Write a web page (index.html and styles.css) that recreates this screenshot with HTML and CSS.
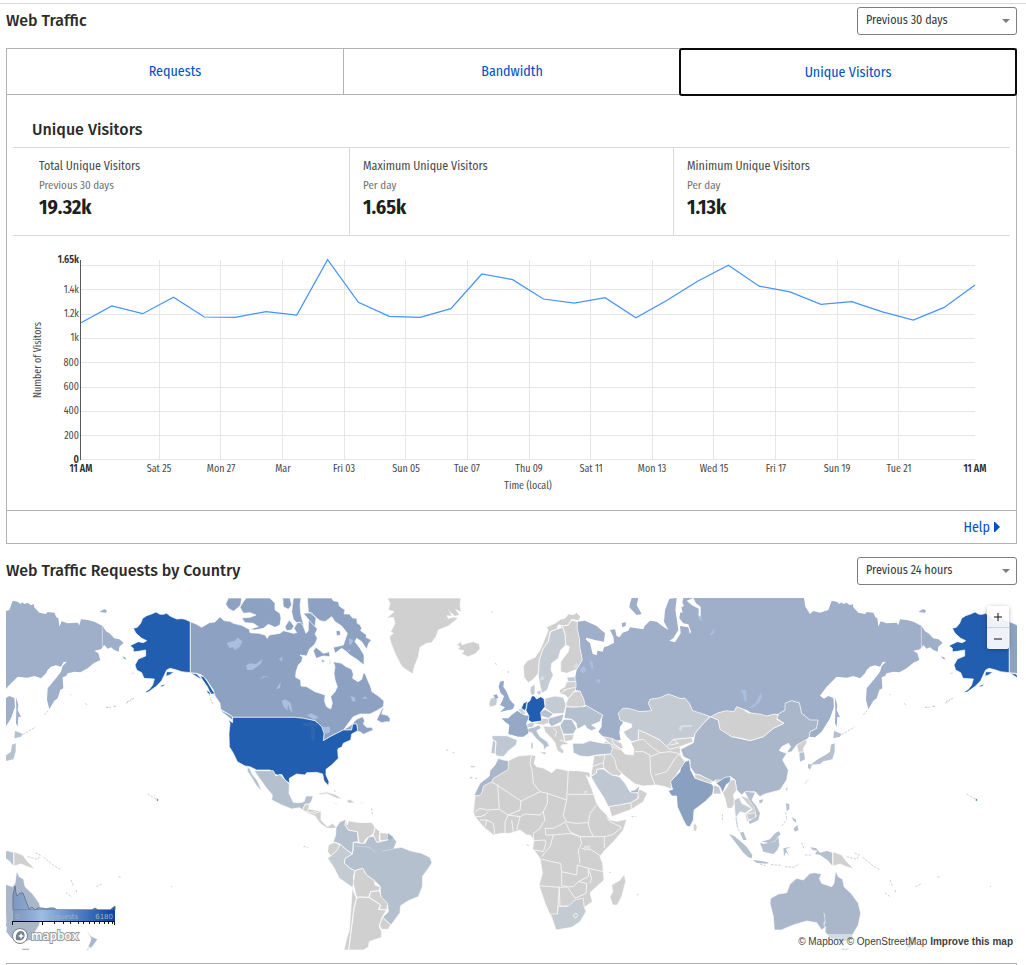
FILE: index.html
```html
<!DOCTYPE html>
<html lang="en">
<head>
<meta charset="utf-8">
<title>Web Traffic</title>
<link rel="stylesheet" href="styles.css">
</head>
<body>
<main class="page">
  <header class="section-head">
    <h2 class="heading"><label for="range-traffic">Web Traffic</label></h2>
    <div class="select-wrap">
      <select class="select" id="range-traffic"><option>Previous 30 days</option><option>Previous 24 hours</option></select>
    </div>
  </header>

  <section class="panel">
    <nav class="tabs">
      <button class="tab" type="button">Requests</button>
      <button class="tab" type="button">Bandwidth</button>
      <button class="tab tab-active" type="button">Unique Visitors</button>
    </nav>
    <h3 class="heading panel-title">Unique Visitors</h3>
    <div class="stats">
      <div class="stat"><div class="stat-name">Total Unique Visitors</div><div class="stat-note">Previous 30 days</div><div class="stat-value">19.32k</div></div>
      <div class="stat"><div class="stat-name">Maximum Unique Visitors</div><div class="stat-note">Per day</div><div class="stat-value">1.65k</div></div>
      <div class="stat"><div class="stat-name">Minimum Unique Visitors</div><div class="stat-note">Per day</div><div class="stat-value">1.13k</div></div>
    </div>
    <svg class="chart" viewBox="13 236 997 274" role="img" aria-label="Unique visitors per day">
      <path class="grid" d="M81 265.500H975M81 289.500H975M81 314.500H975M81 338.500H975M81 362.500H975M81 387.500H975M81 411.500H975M81 435.500H975M81 459.500H975M159.500 260V460M220.500 260V460M282.500 260V460M344.500 260V460M405.500 260V460M467.500 260V460M529.500 260V460M590.500 260V460M652.500 260V460M713.500 260V460M775.500 260V460M837.500 260V460M898.500 260V460"/>
      <path class="axis" d="M80.500 260V460"/>
      <polyline class="series" points="81,322.700 111.800,306 142.700,313.700 173.500,297.300 204.300,317 235.100,317.400 266,311.600 296.800,315 327.600,259.700 358.400,302.300 389.300,316.300 420.100,317.300 450.900,308.600 481.800,274 512.600,279.600 543.400,299 574.300,303.200 605.100,297.700 635.900,317.700 666.700,300.500 697.600,281.200 728.400,265.200 759.200,286.200 790,291.800 820.900,304.300 851.700,301.600 882.500,311.800 913.300,320 944.200,307.400 975,285"/>
      <g class="tick tick-y">
        <text class="strong" x="79" y="263">1.65k</text><text x="79" y="293">1.4k</text><text x="79" y="317">1.2k</text><text x="79" y="341">1k</text><text x="79" y="366">800</text><text x="79" y="390">600</text><text x="79" y="414">400</text><text x="79" y="439">200</text><text class="strong" x="79" y="463">0</text>
      </g>
      <g class="tick tick-x">
        <text class="strong" x="81" y="472">11 AM</text><text x="159" y="472">Sat 25</text><text x="221" y="472">Mon 27</text><text x="283" y="472">Mar</text><text x="344" y="472">Fri 03</text><text x="406" y="472">Sun 05</text><text x="467" y="472">Tue 07</text><text x="529" y="472">Thu 09</text><text x="591" y="472">Sat 11</text><text x="652" y="472">Mon 13</text><text x="714" y="472">Wed 15</text><text x="776" y="472">Fri 17</text><text x="837" y="472">Sun 19</text><text x="899" y="472">Tue 21</text><text class="strong" x="975" y="472">11 AM</text>
        <text x="528" y="489">Time (local)</text>
        <text transform="translate(41 360) rotate(-90)">Number of Visitors</text>
      </g>
    </svg>
    <footer class="panel-foot"><a class="help" href="#help">Help <svg class="caret" viewBox="0 0 6 10"><path d="M0 0h1l5 5-5 5H0z"/></svg></a></footer>
  </section>

  <header class="section-head section-head-map">
    <h2 class="heading"><label for="range-map">Web Traffic Requests by Country</label></h2>
    <div class="select-wrap">
      <select class="select" id="range-map"><option>Previous 24 hours</option><option>Previous 30 days</option></select>
    </div>
  </header>

  <section class="map">
    <svg class="map-canvas" viewBox="0 0 3033 1056" preserveAspectRatio="xMidYMid slice" role="img" aria-label="Requests by country">
      <defs>
      <g id="world">
        <g transform="translate(1902 -24)">
          <path class="ru" d="M-188 95L-165 92L-130 108L-105 130L-108 155L-135 150L-160 143L-163 148L-150 160L-145 180L-142 192L-130 196L-128 182L-112 185L-108 172L-96 168L-78 158L-80 140L-90 120L-75 118L-70 138L-62 142L-52 128L-35 122L-30 112L10 118L14 108L30 92L50 95L70 110L85 120L72 95L75 60L88 26L110 24L106 60L110 85L115 120L100 145L88 152L105 157L122 130L120 108L145 112L150 132L153 125L145 103L130 100L118 85L122 60L130 24H492L496 50L510 72L520 63L540 68L565 60L575 32L590 35L598 42L604 37L610 42L620 38L630 46L638 42L640 52L655 68L675 72L680 66L700 68L706 82L712 85L715 110L722 94L740 100L770 98L775 106L780 88L800 90L820 95L845 108L855 124L865 130L880 145L895 148L908 158L895 170L893 185L880 180L870 172L860 176L850 165L840 178L820 182L832 190L838 210L820 218L800 235L778 247L760 245L740 250L735 258L725 262L727 295L718 300L710 325L700 332L685 358L678 330L680 295L705 265L720 245L725 228L738 215L728 216L720 230L705 226L690 230L680 240L675 250L660 265L640 258L620 263L590 260L560 290L540 317L552 326L565 318L580 324L582 350L570 385L545 425L525 442L508 440L510 425L530 415L534 390L510 390L485 370L478 338L455 332L435 340L435 360L415 372L405 372L380 378L335 370L320 360L290 350L282 365L260 362L235 368L212 380L190 372L170 372L158 362L148 340L135 325L120 325L85 312L60 323L30 328L25 340L35 362L0 365L-30 358L-40 355L-65 370L-60 390L-50 396L-60 410L-62 430L-58 450L-70 452L-90 447L-110 440L-125 425L-115 410L-115 395L-112 375L-135 362L-160 347L-168 345L-168 330L-180 303L-195 300L-195 265L-190 240L-173 210L-180 175L-182 145L-190 115Z"/>
          <path class="ru" d="M585 322L592 345L590 360L600 382L592 380L590 410L585 400L586 360ZM-25 24H-5L-10 45L5 72L-10 75L-32 52L-30 40ZM835 66L850 57L858 62L855 68ZM-55 100l12-4 0 12-10 4z"/>
          <path class="lake" d="M362 308L366 320L358 338L340 352L322 355L345 342ZM300 300l18 0 2 35 -8-3 -3-20zM210 132l14-16-2 14-12 6zM-180 235l12-8 8 14-10 10-8-5zM-152 212l10 5 3 18-6 2zM-132 268h12v10h-8zM172 70l12 8 4 18-12-8z"/>
          <path class="strait" d="M160 24L168 40L182 50L182 80L176 76L176 56L156 46L140 32ZM120 24l12 24-8 4 4 16-12-2z"/>
          <path class="cn" d="M122 478L160 458L165 430L190 400L212 380L235 390L240 415L275 440L330 452L370 440L400 415L432 400L410 385L415 372L435 360L435 340L455 332L478 338L485 370L510 390L534 390L530 415L510 425L508 440L495 455L470 465L455 485L440 488L452 470L445 460L425 470L418 482L440 490L428 510L445 540L440 570L420 600L375 612L360 620L345 605L315 605L305 615L290 600L285 570L272 560L240 572L215 575L180 555L165 552L150 530L150 510L130 500Z"/>
          <path class="none" d="M212 380L235 368L260 362L282 365L290 350L310 358L325 368L360 372L380 378L405 372L415 376L410 388L432 400L400 415L370 440L330 452L305 445L275 440L240 418L235 390ZM163 553L180 555L215 572L215 582L165 565ZM225 570h18v8h-16zM248 608L262 590L270 568L285 570L290 600L280 615L285 640L275 655L262 655L255 625ZM300 615L325 625L345 655L350 680L320 695L315 672L338 658L320 640ZM470 465L500 448L500 460L490 475L492 485L475 487Z"/>
          <path class="in" d="M122 520L148 510L152 540L165 565L215 582L222 590L218 612L195 635L162 660L160 690L150 710L140 708L130 690L112 650L110 618L95 618L85 602L98 598L90 575L120 545ZM228 580L255 562L272 560L270 575L258 585L248 608L240 590Z"/>
          <path class="light" d="M220 585L238 590L244 612L220 612ZM282 630L298 622L305 640L335 655L315 670L300 665L290 680L295 712L290 710L285 670ZM436 595l8-5-2 20zM320 672L348 668L345 685L325 690Z"/>
          <path class="mid" d="M315 605L345 608L335 630L350 650L360 670L355 690L330 702L325 695L350 680L345 655L325 625ZM358 630L370 628L366 638L358 640ZM478 488L492 487L495 508L480 515ZM573 464L584 460L584 485L577 508L550 514L540 522L512 524L530 510L560 493L570 485ZM504 522l12 2-6 15-6-6zM582 422L605 432L600 440L580 445Z"/>
          <path class="chain" d="M605 434L645 410M670 375l12-14M748 313l3 2M793 340l6 6M855 352h15M878 350l10-2M918 335l14-8M495 580l10-12M980 612l25 15M247 672v20"/>
          <path class="us" d="M1007 625l6 4-3 5-4-3z"/>
        </g>
        <g transform="translate(-18 -24)">
          <path class="us" d="M571 95L555 88L545 86L530 87L510 78L500 70L490 73L480 73L468 66L455 72L440 77L428 85L422 100L412 112L400 115L408 130L425 145L440 152L430 158L415 155L390 167L400 175L400 185L415 184L437 180L437 198L415 207L405 225L410 240L425 248L432 265L463 267L458 285L448 298L430 308L445 306L470 288L485 272L500 240L510 235L530 240L545 245L571 248ZM500 245l-2 14 12-5 12-8zM481 287l14-5-2 5-10 4zM365 199l10 3 5 7-6-2zM393 249l8-1-1 4zM410 320l8-4M427 309l10-4zM571 248L590 252L600 262L615 285L618 295L606 270L590 260ZM600 257L612 260L624 278L640 305L645 300V312L632 312L622 290L608 270ZM620 300l12 8-2 6-8-6z"/>
          <path class="chain" d="M318 352h14M340 350l8-3M378 340l14-8M396 328l10-6M626 312l8 12M630 326l10 18"/>
        </g>
        <g transform="translate(582 -24)">
          <path class="ca" d="M-29 95L-10 103L5 112L15 106L28 98L45 96L60 80L72 92L90 94L100 100L125 106L148 118L150 128L175 130L195 135L202 145L208 135L240 130L250 122L262 125L280 130L290 128L282 115L292 98L305 96L318 130L325 122L325 95L330 88L340 100L352 118L345 132L352 145L345 162L328 178L320 198L300 195L308 202L305 215L295 225L288 245L287 262L302 270L303 288L320 290L345 305L360 310L375 315L374 335L380 350L392 357L397 340L392 320L405 305L412 290L405 270L402 250L405 230L400 215L425 220L435 228L455 238L460 252L458 265L474 275L485 268L490 250L495 250L503 270L512 290L516 305L535 318L552 333L550 350L530 362L510 372L480 372L460 380L445 400L432 418L450 408L470 388L488 380L494 392L490 402L500 412L515 412L520 420L490 433L480 425L473 425L470 402L458 402L455 420L430 420L410 430L390 440L370 452L372 430L365 410L345 392L330 390L310 385L285 382H98L90 375L62 358L60 340L45 318L40 300L20 270L5 255L-10 250L-29 248Z"/>
          <path class="ca" d="M545 358L552 350L545 372L562 376L570 385L570 396L560 395L545 398L530 390ZM85 24H125L122 45L112 55L100 64L85 55L77 42ZM138 24H210L225 40L225 60L240 70L243 85L240 105L225 112L205 103L190 115L165 120L148 118L175 110L160 100L135 98L125 84L150 82L168 75L150 68L130 70L120 52L128 38ZM248 24H270L275 45L265 58L250 50ZM255 110L268 90L282 108L275 120L260 122ZM280 24H303L300 45L302 70L312 110L300 96L290 98L280 88L275 65ZM322 24H395L400 32L415 35L418 48L435 60L432 72L448 72L458 84L470 85L472 100L480 104L485 115L482 122L500 135L498 142L514 150L506 160L500 178L485 155L470 145L465 155L480 175L492 195L492 225L470 208L450 195L440 185L425 175L405 190L400 172L430 165L442 130L425 108L405 95L395 80L375 95L360 92L345 80L325 65ZM310 70L335 68L348 85L345 110L335 100ZM340 182L348 172L370 190L388 185L390 200L370 198L348 205ZM408 122l12 0 2 12-12 4zM362 208l14 4-8 6zM390 208l2 12-5 2zM62 360L96 378L99 392L84 380L66 366Z"/>
          <path class="lake" d="M80 158L105 152L112 142L128 155L118 172L105 180L98 172L88 174ZM138 226L150 220L168 222L188 206L182 222L158 240L142 240ZM178 268L190 258L212 262L192 262ZM236 208l12-8-2 14zM228 298l14-22-2 18zM245 332L256 328L272 338L278 368L270 360L264 342L262 362L250 348ZM320 375l14-5 22 12-12 8zM362 410l28 0 0 15-12 8zM446 145L460 150L455 162L448 165ZM442 180h10l-5 5zM452 318L465 322L466 335L456 332ZM485 325l12-6 5 8z"/>
          <path class="us" d="M98 382H285L310 385L345 392L365 410L372 430L370 452L390 440L410 430L430 420L455 420L458 402H470L473 422L455 432L452 450L430 460L425 472L415 475L413 480L415 505L395 525L378 538L378 555L387 575L385 587L372 572L368 552L350 547L320 548L315 555L290 552L268 565L268 580L255 570L245 553L235 556L225 553L210 540H170L150 530L135 528L112 515L100 490L88 470L87 430L90 400L85 390L98 398Z"/>
          <path class="us-lake" d="M335 408L345 415L345 450L335 452L332 430ZM305 400L335 395L358 402L350 412L330 408L315 408Z"/>
          <path class="none" d="M562 24H783L780 45L785 75L770 88L745 108L728 115L715 120L708 140L695 158L680 160L660 172L655 200L645 225L638 252L620 240L608 232L600 220L585 190L573 160L568 140L580 130L572 125L585 100L580 82L560 85L582 65L565 60L570 40Z"/>
          <path class="strait" d="M783 88l-20-6-18 4-6-10 16 2-12-24 8 12 14 12 12-4-12-18 20 10z"/>
        </g>
        <g transform="translate(702 486)">
          <path class="mx" d="M22 22L45 32H100L108 48L120 43L135 60L148 72L147 100L160 127L180 128L192 125L198 108L220 108L215 122L208 132L195 133L188 150L178 143L155 147L125 135L95 120L97 105L80 85L62 60L48 40L38 26L30 28L38 45L52 62L66 94L50 78L32 48L22 34Z"/>
          <path class="none" d="M188 150L195 133L208 132L206 147L225 150L243 153L243 180L262 200L278 190L290 203L282 205L262 205L240 190L225 168L205 160ZM235 100L260 96L285 103L308 117L290 115L260 101L240 104ZM318 122L330 118L345 128L328 130ZM283 129h9v3h-9zM360 127h10v3h-10z"/>
          <path class="border" d="M206 147L200 155L215 158L232 150M220 162L243 153"/>
          <path class="br" d="M288 203L300 185L318 178L315 195L325 210L352 215L355 245L340 247L340 270L335 280L320 270L300 252L280 245L287 225ZM340 247L375 250L385 232L400 228L412 247L442 240L458 230L470 245L462 265L485 262L510 272L545 280L570 292L576 308L562 330L548 348L547 380L535 410L505 422L482 437L480 458L453 495L428 472L445 455L443 435L422 410L420 378L403 362L380 345L368 325L345 332L330 325L313 310L315 295L337 282Z"/>
          <path class="light" d="M300 252L320 270L337 282L315 295L313 310L330 325L345 332L340 350L342 370L337 382L298 355L280 320L263 295L272 288L290 272Z"/>
          <path class="none" d="M318 178L322 195L326 182L340 185L365 188L395 187L405 202L400 222L380 235L370 250L358 250L352 215L325 210L315 195ZM405 202L420 215L417 235L420 245L410 247L400 225ZM420 218L445 220L442 240L420 242ZM265 255L282 247L300 255L290 272L272 288L263 275ZM345 332L368 325L380 345L403 362L405 375L420 380L418 392L392 395L386 412L360 412L350 415L340 370ZM392 395L418 392L425 412L443 430L440 450L418 448L422 435L388 412ZM350 412L360 410L386 412L422 435L415 448L440 450L426 472L418 500L425 515V532L388 545L385 562L370 570H326L335 500L342 440ZM428 472L452 495L445 508L425 508L418 495ZM337 382L345 405L350 415L342 450L335 500L326 570H312L320 535L328 510L333 440Z"/>
          <path class="ru" d="M445 220L460 232L450 240L442 238Z"/>
          <path class="river" d="M345 258L375 260L395 265L405 276M425 274L445 270L462 266"/>
          <path class="chain" d="M190 260h8M200 263h4M395 145l2 20M282 90l4 6M698 20h6"/>
        </g>
        <g transform="translate(1302 -24)">
          <path class="none" d="M50 165L62 155L66 165L80 160L100 155L118 162L120 177L105 192L85 200L65 192L72 182L52 178L60 170ZM250 228L262 212L285 202L300 180L315 145L325 120L318 112L345 100L362 88L375 85L385 72L400 74L410 68L422 80L415 92L395 88L385 105L370 108L355 105L350 118L330 125L325 155L310 175L298 210L295 250L280 268L265 278L252 262ZM355 105L370 108L385 105L395 90L412 95V115L418 145L420 175L427 210L410 238L380 250L362 245L362 215L385 185L388 170L377 165L375 135L370 115ZM358 300L375 290L380 275L408 275L408 290L405 305L385 325L375 315L360 312ZM378 340L385 325L400 305L420 303L432 330L435 345L425 352L378 350ZM232 358L245 355L258 370L250 375ZM278 400L303 393L300 385L325 385L328 398L310 405L288 402ZM370 435L402 433L398 450L375 455ZM310 408L335 410L360 405L370 435L375 455L388 462L365 465L362 472L372 482L368 492L352 482L345 458L330 440L315 425Z"/>
          <path class="none" d="M595 420L620 430L660 450L680 470L700 448L755 442L760 455L720 470L722 495L735 515L705 560L692 575L695 598L675 590L650 585L610 588L585 582L560 562L545 550L530 535L520 520L508 500L515 475L492 460L495 452L540 475L555 492L580 495L582 478L572 458L595 450ZM490 440L515 445L545 460L550 475L535 478L515 470Z"/>
          <path class="border" d="M630 495L632 550L645 585M585 485L610 485L630 495M645 555L680 545L705 505L720 490M595 450L610 448L640 475L660 488L632 500M660 488L690 485L715 490L735 515M680 470L690 478L720 470M700 448L715 460L690 465M515 445L520 460L540 475M345 440L350 425L340 415M360 450L375 455M370 300L405 292M375 315L385 325M360 312L380 298"/>
          <path class="light" d="M350 118L368 112L375 135L377 165L362 180L355 205L335 220L333 240L340 255L330 275L322 300L305 310L300 285L295 260L298 210L310 175L325 155L332 125ZM315 325L345 318L370 322L378 345L372 370L340 372L315 355ZM272 290L285 283L285 310L275 318L270 302ZM290 305l12-5 2 12-10 2zM380 262L405 260L406 275L385 275ZM152 325L165 322L172 328L170 345L150 352L147 340ZM260 402L275 397L285 400L278 412L262 412ZM535 370L548 355L565 355L600 365L635 362L625 340L630 328L660 323L685 312L720 325L735 325L748 340L758 362L790 372L810 380L790 400L765 430L762 442L700 448L680 470L660 450L620 430L595 420L595 450L575 455L560 440L550 425L575 412L575 402L550 395L540 390Z"/>
          <path class="sp" d="M155 437L200 437L232 450L228 465L208 480L190 500L170 498L165 490L168 455L158 450ZM158 450L168 455L165 492L153 490Z"/>
          <path class="br" d="M300 367L315 358L340 372L325 385L303 378ZM325 385L372 372L365 395L335 410L325 398ZM360 405L372 388L395 388L410 415L400 432L370 432ZM378 350L400 352L430 350L440 347L465 362L488 375L480 395L455 405L470 415L455 422L440 415L435 405L412 418L408 398L395 388L372 385L375 368ZM262 425L265 415L280 412L298 405L303 415L290 422L300 440L322 455L328 468L318 472L312 482L310 465L285 442L275 428ZM298 486L318 486L315 494ZM273 458h6v18h-6zM398 460L430 460L450 452L490 460L510 460L518 475L512 492L470 495L445 500L420 498L400 488Z"/>
          <path class="uk" d="M180 275L192 272L190 290L200 305L210 330L224 345L218 358L195 362L180 367L195 352L180 345L188 330L192 318L182 310L176 290ZM160 316l10-3 5 10-8 4zM185 385L205 385L215 375L232 362L250 375L268 378L258 402L262 410L265 430L250 440L235 440L205 432L208 405L195 395Z"/>
          <path class="us" d="M275 318L283 318L290 327L302 320L312 326L315 350L302 367L305 393L275 397L265 390L267 378L258 362L260 340L270 332ZM244 355L250 340L262 334L260 352L255 362Z"/>
          <path class="pale" d="M715 418L722 406L755 404L755 410L728 412L725 422ZM400 228l10-10 4 10-8 8zM300 262l10-4 2 10-10 4z"/>
          <path class="chain" d="M155 68l4-3M205 243v6M165 220l5 4M18 480h8M38 488h5M95 528l6 3M90 565l8-3M105 565h8"/>
        </g>
        <g transform="translate(1362 426)">
          <path class="none" d="M145 62L175 48L215 44L228 48L222 70L230 80L250 84L275 98L290 85L325 92L350 92L375 95L388 97L392 110L384 112L378 105L395 145L410 190L420 205L440 225L450 240L470 244L500 238L490 270L460 305L435 330L420 350L428 370L432 420L410 440L390 458L397 485L375 500L375 515L360 545L335 562L288 570L275 535L255 490L237 435L247 400L240 355L218 325L222 300L210 285L200 285L180 270L165 275L150 280L125 280L100 285L70 260L45 230L40 215L45 170L75 128ZM493 403L497 425L485 470L472 495L458 495L450 470L458 455L455 435L480 420Z"/>
          <path class="cn" d="M145 62L130 60L115 55L105 75L90 92L88 108L60 130L50 150L42 168L62 165L68 150L70 138L95 125L100 115L145 88Z"/>
          <path class="light" d="M272 522H292L295 498L325 498L345 480L370 475L372 498L378 515L360 545L335 562L288 570Z"/>
          <path class="border" d="M113 133L118 208L80 210M95 125L183 183L240 155L220 130L216 90L210 70L215 44M240 155L262 160L320 180L325 90M325 163H408M320 180L310 225L318 245M262 160L262 190L250 215L255 245M183 183L180 210L145 225L118 208M80 210L60 205L45 215M145 225L180 230L195 222L240 225L250 215M170 270L180 230M250 245L240 265L220 280L220 300M255 265L280 265L300 255L318 245L345 250L385 248L390 220L410 195M385 248L388 265L400 290L435 290L460 283L485 262L450 245L440 232M318 250L330 275L360 290L400 290M255 265L258 285L280 285L330 280L360 290L365 310L355 330L360 370M280 285L270 320L245 350M220 302L255 300L258 310L250 335L225 330M245 357L275 365L302 370L305 395L350 405L352 375L385 385L430 395M237 437L300 442L340 440L355 425L385 410L385 385M305 395L305 437L325 440M298 440L292 522M325 498L300 500L298 445M355 425L380 430L378 460L345 475L325 445M365 325L395 330L425 350M105 285L100 250L80 240M135 280L135 245L145 225M160 275L155 240M45 230L60 230L75 225L85 215M60 240L80 240L75 260M385 385L395 415L390 430M433 290V325"/>
          <path class="border" d="M340 525l8-6 6 8-8 8z"/>
          <path class="pale-grey" d="M372 318l18-3 0 12-18 6zM370 155l10-4 2 6-10 4z"/>
          <path class="none" d="M402 47L430 45L452 42L465 60L470 85L485 100L478 108L455 105L432 85L410 88L408 100L393 108L398 75ZM447 200L475 195L512 188L535 175L533 155L540 148L562 160L550 185L515 208L455 230ZM700 255L706 250L712 262L708 274L700 272Z"/>
          <path class="border" d="M400 78L430 68L435 45M512 188L516 208M430 68L432 85"/>
          <path class="sp" d="M393 110L410 98L410 88L430 87L455 105L478 110L495 130L510 155L535 160L533 175L512 188L475 195L445 200L430 170L410 140Z"/>
          <path class="cn" d="M512 152L525 150L538 138L535 158L515 158Z"/>
          <path class="chain" d="M32 80h6M30 112h8M515 230h14M530 462l5 3M448 397h5M200 314l6 3"/>
        </g>
        <g transform="translate(1962 426)">
          <path class="mid" d="M207 282L222 288L240 302L260 320L277 345L275 355L265 352L250 338L230 312ZM278 360L300 362L328 368L320 371L290 369ZM300 308L312 312L325 308L345 305L355 290L358 315L352 330L340 342L310 335ZM240 278L250 275L260 300L250 300ZM370 325L392 320L378 328L388 348L378 336L372 350ZM378 190L388 192L388 208L380 214ZM400 266L412 255L416 270L405 275ZM395 232l12 6 2 10-8-5zM450 322L468 324L480 338L500 333L517 338V377L505 362L480 345L465 342L472 332L458 330ZM305 305L330 298L345 280L356 274L362 282L352 292L345 304L325 308Z"/>
          <path class="none" d="M519 335L545 345L560 365L582 387L560 380L540 372L519 378Z"/>
          <path class="chain" d="M228 235L232 258L240 278M333 374L365 376M375 380L400 382L418 372M365 258L380 238M425 308L432 326M435 345h18M560 350L590 358L598 345L582 338M608 352L640 378L658 388M675 458l18 14M766 440l16-8M832 410l8 2M690 420l8 20M706 450v8M380 235l-4-20M300 372l20 6M990 440h3"/>
          <path class="cn" d="M527 392L535 410L548 418L552 440L575 462L595 490L602 520L595 555L580 580L575 600L545 605L510 595L495 575L497 560L485 570L470 548L440 543L400 555L380 563L365 570L343 570L340 530L330 490L332 475L355 462L380 458L390 432L410 415L430 420L450 400L465 398L485 402L478 415L485 430L515 440L522 430ZM543 625H565V640H543ZM735 570L750 588L770 598L758 615L748 625L740 622L748 605L750 595ZM728 640L745 620L742 632Z"/>
          <path class="pale" d="M490 515l5 8 2 24-5 20-2-18 4-8z"/>
        </g>
      </g>
      </defs>
      <use href="#world" x="-2457"/>
      <use href="#world"/>
      <use href="#world" x="2457"/>
      <path class="meridian" d="M289 84V150M2746 84V150"/>
    </svg>

    <div class="zoom">
      <button class="zoom-button" type="button" aria-label="Zoom in"><svg viewBox="0 0 22 21"><path d="M11 7V15M7 11H15"/></svg></button>
      <button class="zoom-button" type="button" aria-label="Zoom out"><svg viewBox="0 0 22 21"><path d="M7 11H15"/></svg></button>
    </div>

    <svg class="legend" viewBox="0 0 104 42" role="img" aria-label="Requests, 0 to 6180">
      <defs><linearGradient id="ramp"><stop offset="0" stop-color="#6f8cb8" stop-opacity=".75"/><stop offset=".28" stop-color="#9dbce4"/><stop offset="1" stop-color="#0643a5"/></linearGradient></defs>
      <path d="M1 27V12L3 3L4 10L5 13L8 10H11L14 18L17 26L20 24L23 27L26 25H30L34 26L38 25L42 25L45 27H80L83 25L86 27H98L103 23V27Z" fill="url(#ramp)" stroke="#667998"/>
      <rect x="1" y="27" width="102" height="11" fill="url(#ramp)"/>
      <text x="3" y="36">0</text><text x="36" y="36">requests</text><text class="legend-end" x="101" y="36">6180</text>
      <path class="legend-ticks" d="M1 38.500H103M.5 38V42M30.500 38V42M42.500 38V41M51.500 38V41M58.500 38V41M66.500 38V41M71.500 38V41M77.500 38V41M82.500 38V41M87.500 38V41M92.500 38V41M96.500 38V41M100.500 38V41M102.500 38V42"/>
    </svg>

    <a class="logo" href="#mapbox" aria-label="Mapbox">
      <svg viewBox="0 0 80 18">
        <circle cx="9" cy="9" r="7.500" fill="#fff" stroke="#777d85"/>
        <path d="M5 13C4 7 7 4 10 4C15 4 15 13 9 13.500Z" fill="#75808d"/>
        <path d="M10 6L11 8L13 9L11 10L10 12L9 10L7 9L9 8Z" fill="#fff"/>
        <text x="20" y="13">mapbox</text>
      </svg>
    </a>
    <div class="credits"><a href="#mapbox">© Mapbox</a> <a href="#osm">© OpenStreetMap</a> <a class="improve" href="#improve">Improve this map</a></div>
  </section>

  <section class="panel panel-next"></section>
</main>
</body>
</html>
```

FILE: styles.css
```css
* { box-sizing: border-box; }
html { overflow: hidden; }
body {
  margin: 0;
  background: #fff;
  color: #36393a;
  font-family: "Fira Sans Condensed", "Fira Sans", Roboto, sans-serif;
  font-size: 14px;
}
.page {
  margin-top: 3px;
  padding: 3px 9px 0 6px;
  border-top: 1px solid #d9d9d9;
}
.section-head {
  display: flex;
  justify-content: space-between;
  height: 28px;
}
.section-head-map { margin: 13px 0; }
.heading {
  margin: 0;
  font-family: "Fira Sans", Roboto, sans-serif;
  font-size: 16px;
  line-height: 28px;
  font-weight: 500;
  color: #2b2b2b;
}
.select-wrap { position: relative; width: 160px; }
.select-wrap::after {
  content: "";
  position: absolute;
  right: 7px;
  top: 12px;
  border: 4px solid transparent;
  border-top-color: #7d7d7d;
  border-bottom: 0;
  pointer-events: none;
}
.select {
  appearance: none;
  width: 100%;
  height: 28px;
  padding: 0 24px 2px 8px;
  border: 1px solid #7d7d7d;
  border-radius: 3px;
  background: #fff;
  color: #36393a;
  font-family: inherit;
  font-size: 12px;
}
.panel { margin-top: 13px; border: 1px solid #b3b3b3; }
.tabs {
  display: grid;
  grid-template-columns: repeat(3, 1fr);
  height: 47px;
  margin: -1px -1px 0;
}
.tab {
  height: 47px;
  padding: 0 0 1px;
  border: 1px solid #b3b3b3;
  border-right: 0;
  background: #fff;
  color: #0051c3;
  font-family: inherit;
  font-size: 14px;
}
.tab-active {
  height: 48px;
  margin-left: -1px;
  padding: 0;
  border: 2px solid #0b0b0b;
  border-radius: 3px;
}
.panel-title { padding: 21px 25px 3px; }
.stats {
  display: grid;
  grid-template-columns: repeat(3, 1fr);
  height: 89px;
  margin: 0 6px;
  padding: 0 12px 0 13px;
  border: solid #d9d9d9;
  border-width: 1px 0;
}
.stat { padding: 10px 13px 0; border-right: 1px solid #d9d9d9; }
.stat:last-child { border-right: 0; }
.stat-name { font-size: 12px; line-height: 17px; color: #4a4a4a; }
.stat-note { margin-top: 3px; font-size: 11px; line-height: 15px; color: #717171; }
.stat-value { margin-top: 2px; font-size: 20px; line-height: 24px; font-weight: 700; color: #1d1f20; }
.chart { display: block; width: calc(100% - 12px); margin: 0 6px; }
.grid { fill: none; stroke: #e6e6e6; }
.axis { stroke: #595959; }
.series { fill: none; stroke: #4693ff; stroke-width: 1.25; }
.tick { font-size: 10px; fill: #4a4a4a; }
.tick-y { text-anchor: end; }
.tick-x { text-anchor: middle; }
.strong { font-weight: 600; fill: #313131; }
.panel-foot {
  display: flex;
  justify-content: flex-end;
  align-items: center;
  height: 33px;
  padding-right: 16px;
  border-top: 1px solid #b3b3b3;
}
.help { display: flex; align-items: center; gap: 4px; color: #0051c3; text-decoration: none; }
.caret { width: 6px; height: 10px; fill: currentColor; }

.map { position: relative; height: 352px; overflow: hidden; }
.map-canvas { display: block; width: 100%; height: 352px; }
.map-canvas path { stroke: #fff; stroke-width: 2; stroke-linejoin: round; }
.map-canvas .ru { fill: #9faec9; stroke: none; }
.map-canvas .ca { fill: #8da2c2; }
.map-canvas .us { fill: #225eaf; stroke-width: 2; }
.map-canvas .cn { fill: #aab7ca; }
.map-canvas .in { fill: #89a0c0; }
.map-canvas .br, .map-canvas .mx { fill: #b5c0cf; }
.map-canvas .mid { fill: #b6c1d0; stroke: none; }
.map-canvas .light { fill: #c5cbd3; }
.map-canvas .sp { fill: #bfc7d3; }
.map-canvas .uk { fill: #95a9c7; stroke: none; }
.map-canvas .none { fill: #d0d0d0; }
.map-canvas .lake { fill: #a9bfdf; stroke: none; }
.map-canvas .us-lake { fill: #2d65b1; stroke: none; }
.map-canvas .pale { fill: #d3deee; stroke: none; }
.map-canvas .pale-grey { fill: #e2e2e2; stroke: none; }
.map-canvas .strait { fill: #fff; stroke: none; }
.map-canvas .border { fill: none; stroke: #f4f4f4; stroke-width: 3; }
.map-canvas .river { fill: none; stroke: #d2dded; }
.map-canvas .chain { fill: none; stroke: #c8cfd9; stroke-width: 3; stroke-dasharray: 7 4; }
.map-canvas .meridian { stroke: #e5eaf3; }

.zoom {
  position: absolute;
  top: 8px;
  right: 8px;
  width: 22px;
  border-radius: 2px;
  background: rgba(255, 255, 255, .93);
  box-shadow: 0 1px 4px rgba(0, 0, 0, .3);
}
.zoom-button { display: block; width: 22px; height: 21px; padding: 0; border: 0; background: none; }
.zoom-button + .zoom-button { height: 22px; border-top: 1px solid #ccd2da; }
.zoom-button svg { display: block; width: 22px; height: 21px; fill: none; stroke: #111; }

.legend { position: absolute; left: 6px; bottom: 25px; width: 104px; height: 42px; }
.legend text { font: 7px "DejaVu Sans", sans-serif; fill: #a5b0c0; }
.legend .legend-end { text-anchor: end; }
.legend-ticks { stroke: #111; }
.logo { position: absolute; left: 5px; bottom: 5px; }
.logo svg { display: block; width: 80px; height: 18px; }
.logo text {
  font: 600 12px "Open Sans", sans-serif;
  fill: #fff;
  stroke: #9a9a9a;
  stroke-width: 2;
  paint-order: stroke;
}
.credits {
  position: absolute;
  right: 0;
  bottom: 0;
  padding: 0 4px;
  background: rgba(255, 255, 255, .5);
  font: 10px/16px "Liberation Sans", sans-serif;
  white-space: nowrap;
}
.credits a { color: #404040; text-decoration: none; }
.credits .improve { font-weight: 700; }
.panel-next { height: 40px; }
```
